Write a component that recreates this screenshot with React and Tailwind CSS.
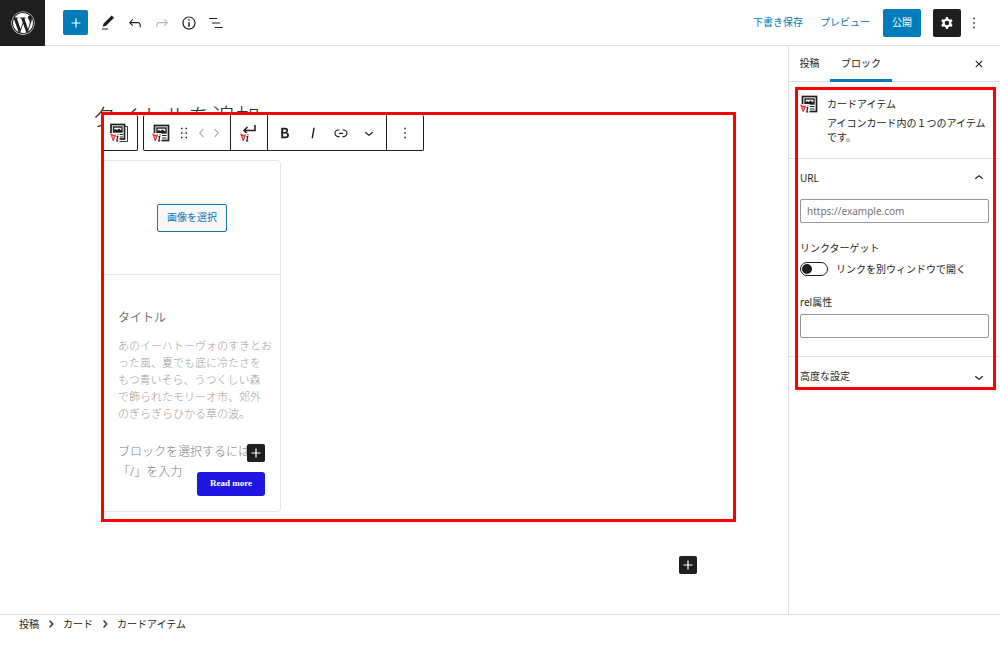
import React from 'react'
import { FaWordpress } from 'react-icons/fa'

const paths = {
  plus: 'M18 11.2h-5.2V6h-1.6v5.2H6v1.6h5.2V18h1.6v-5.2H18z',
  pencil: 'M20.1 5.1L16.9 2 6.2 12.7l-1.3 4.4 4.5-1.3L20.1 5.1zM4 20.8h8v-1.5H4v1.5z',
  undo: 'M18.3 11.7c-.6-.6-1.4-.9-2.3-.9H6.7l2.9-3.3-1.1-1-4.5 5L8.5 16l1-1-2.7-2.7H16c.5 0 .9.2 1.3.5 1 1 1 3.4 1 4.5v.3h1.5v-.2c0-1.5 0-4.3-1.5-5.7z',
  redo: 'M15.6 6.5l-1.1 1 2.9 3.3H8c-.9 0-1.7.3-2.3.9-1.4 1.5-1.4 4.2-1.4 5.6v.2h1.5v-.3c0-1.1 0-3.5 1-4.5.3-.3.7-.5 1.3-.5h9.2L14.5 15l1.1 1.1 4.6-4.6-4.6-5z',
  info: 'M12 3.2c-4.8 0-8.8 3.9-8.8 8.8 0 4.8 3.9 8.8 8.8 8.8 4.8 0 8.8-3.9 8.8-8.8 0-4.8-4-8.8-8.8-8.8zm0 16c-4 0-7.2-3.3-7.2-7.2C4.8 8 8 4.8 12 4.8s7.2 3.3 7.2 7.2c0 4-3.2 7.2-7.2 7.2zM11 17h2v-6h-2v6zm0-8h2V7h-2v2z',
  listView: 'M13.8 5.2H3v1.5h10.8V5.2zm-3.6 12v1.5H21v-1.5H10.2zm7.2-6H6.6v1.5h10.8v-1.5z',
  cog: 'M10.289 4.836A1 1 0 0111.275 4h1.306a1 1 0 01.987.836l.244 1.466c.787.26 1.503.679 2.108 1.218l1.393-.522a1 1 0 011.216.437l.653 1.13a1 1 0 01-.23 1.273l-1.148.944a6.025 6.025 0 010 2.435l1.149.946a1 1 0 01.23 1.272l-.653 1.13a1 1 0 01-1.216.437l-1.394-.522c-.605.54-1.32.958-2.108 1.218l-.244 1.466a1 1 0 01-.987.836h-1.306a1 1 0 01-.986-.836l-.244-1.466a5.995 5.995 0 01-2.108-1.218l-1.394.522a1 1 0 01-1.217-.436l-.653-1.131a1 1 0 01.23-1.272l1.149-.946a6.026 6.026 0 010-2.435l-1.148-.944a1 1 0 01-.23-1.272l.653-1.131a1 1 0 011.217-.437l1.393.522a5.994 5.994 0 012.108-1.218l.244-1.466zM14.929 12a3 3 0 11-6 0 3 3 0 016 0z',
  more: 'M13 19h-2v-2h2v2zm0-6h-2v-2h2v2zm0-6h-2V5h2v2z',
  close: 'M12 13.06l3.712 3.713 1.061-1.06L13.061 12l3.712-3.712-1.06-1.06L12 10.938 8.288 7.227l-1.061 1.06L10.939 12l-3.712 3.712 1.06 1.061L12 13.061z',
  drag: 'M8 7h2V5H8v2zm0 6h2v-2H8v2zm0 6h2v-2H8v2zm6-14v2h2V5h-2zm0 8h2v-2h-2v2zm0 6h2v-2h-2v2z',
  chevronLeft: 'M14.6 7l-1.2-1L8 12l5.4 6 1.2-1-4.6-5z',
  chevronRight: 'M10.6 6L9.4 7l4.6 5-4.6 5 1.2 1 5.4-6z',
  chevronDown: 'M17.5 11.6L12 16l-5.5-4.4.9-1.2L12 14l4.5-3.6 1 1.2z',
  chevronUp: 'M6.5 12.4L12 8l5.5 4.4-.9 1.2L12 10l-4.5 3.6-1-1.2z',
  bold: 'M14.7 11.3c1-.6 1.5-1.6 1.5-3 0-2.3-1.3-3.4-4-3.4H7v14h5.8c1.4 0 2.5-.3 3.3-1 .8-.7 1.2-1.7 1.2-2.9.1-1.9-.8-3.1-2.6-3.7zm-5.1-4h2.3c.6 0 1.1.1 1.4.4.3.3.5.7.5 1.2s-.2 1-.5 1.2c-.3.3-.8.4-1.4.4H9.6V7.3zm4.6 9c-.4.3-1 .4-1.7.4H9.6v-3.9h2.9c.7 0 1.3.2 1.7.5.4.3.6.8.6 1.5s-.2 1.2-.6 1.5z',
  italic: 'M12.5 5L10 19h1.9l2.5-14z',
  link: 'M15.6 7.2H14v1.5h1.6c2 0 3.7 1.7 3.7 3.7s-1.7 3.7-3.7 3.7H14v1.5h1.6c2.8 0 5.2-2.3 5.2-5.2 0-2.9-2.3-5.2-5.2-5.2zM4.7 12.4c0-2 1.7-3.7 3.7-3.7H10V7.2H8.4c-2.9 0-5.2 2.3-5.2 5.2 0 2.9 2.3 5.2 5.2 5.2H10v-1.5H8.4c-2 0-3.7-1.7-3.7-3.7zm4.6.9h5.3v-1.5H9.3v1.5z',
}

const Icon = ({ name, className = 'size-[18px]' }) => (
  <svg viewBox="0 0 24 24" fill="currentColor" fillRule="evenodd" className={`shrink-0 ${className}`} aria-hidden="true">
    <path d={paths[name]} />
  </svg>
)

// Small red and black plugin mark in the lower left corner of its block icons
const Mark = () => (
  <g fill="none">
    <path d="M1 10h9.500v9.500H1z" fill="#fff" />
    <path d="M2 11l2.200 6.500L6.500 12l-2 .8L2 11z" fill="#fbd0d3" stroke="#e8323c" strokeWidth="1.2" strokeLinejoin="round" />
    <path d="M7.500 13.500h1.200l-.9 4.300h1.400M9 11.300v.9" stroke="#1e1e1e" strokeWidth="1.200" />
  </g>
)

const CardIcon = () => (
  <svg viewBox="0 0 20 20" className="size-5 shrink-0" aria-hidden="true">
    <rect x="3.500" y="2.500" width="14" height="15" fill="#fff" stroke="#1e1e1e" strokeWidth="1.700" />
    <rect x="6" y="5" width="9" height="5" fill="#fff" stroke="#1e1e1e" strokeWidth="1.400" />
    <path d="M6 10V8.500l2-1.500 1.500 1 2-1.500L15 9v1z" fill="#1e1e1e" />
    <path d="M11 12.500h4.500M11 15h4.500" stroke="#1e1e1e" strokeWidth="1.200" />
    <Mark />
  </svg>
)

const CardsIcon = () => (
  <svg viewBox="0 0 20 20" className="size-5 shrink-0" aria-hidden="true">
    <path d="M16 3.500h2.500v15H8" fill="none" stroke="#1e1e1e" strokeWidth="0.900" />
    <rect x="2" y="1.500" width="13.500" height="14.500" fill="#fff" stroke="#1e1e1e" strokeWidth="1.700" />
    <rect x="4.500" y="4" width="8.500" height="5" fill="#fff" stroke="#1e1e1e" strokeWidth="1.400" />
    <path d="M4.500 9V7.500l2-1.500L8 7l2-1.500L13 8v1z" fill="#1e1e1e" />
    <path d="M10.500 11.500H14M10.500 14H14" stroke="#1e1e1e" strokeWidth="1.200" />
    <Mark />
  </svg>
)

const ReturnIcon = () => (
  <svg viewBox="0 0 20 20" className="size-5 shrink-0" aria-hidden="true">
    <path d="M16 2v5.500H5M8.500 4L5 7.500 8.500 11" fill="none" stroke="#1e1e1e" strokeWidth="1.500" />
    <Mark />
  </svg>
)

const Inserter = ({ className = '' }) => (
  <button aria-label="ブロックを追加" className={`flex size-[18px] items-center justify-center rounded-xs bg-[#1e1e1e] text-white ${className}`}>
    <Icon name="plus" />
  </button>
)

const tools = [
  { name: 'pencil', label: 'ツール' },
  { name: 'undo', label: '元に戻す' },
  { name: 'redo', label: 'やり直す', disabled: true },
  { name: 'info', label: '詳細' },
  { name: 'listView', label: 'リスト表示' },
]

const Header = () => (
  <header className="flex h-[46px] items-center border-b border-[#e0e0e0]">
    <a href="#" aria-label="投稿一覧" className="-mb-px flex h-[46px] w-[45px] items-center justify-center bg-[#1e1e1e] text-white">
      <FaWordpress className="size-6" />
    </a>
    <div className="flex items-center pl-[18px]">
      <button aria-label="ブロック挿入ツール" className="mr-1.5 flex size-[25px] items-center justify-center rounded-xs bg-[#007cba] text-white">
        <Icon name="plus" />
      </button>
      {tools.map((tool) => (
        <button
          key={tool.name}
          aria-label={tool.label}
          disabled={tool.disabled}
          className="flex h-[25px] w-[27px] items-center justify-center disabled:text-[#b5b5b5]"
        >
          <Icon name={tool.name} />
        </button>
      ))}
    </div>
    <div className="ml-auto flex items-center pr-[17px]">
      <button className="mr-[17px] text-[#007cba]">下書き保存</button>
      <button className="mr-[13px] text-[#007cba]">プレビュー</button>
      <button className="mr-3 h-7 rounded-xs bg-[#007cba] px-[9px] text-white">公開</button>
      <button aria-label="設定" className="mr-1 flex size-7 items-center justify-center rounded-xs bg-[#1e1e1e] text-white">
        <Icon name="cog" />
      </button>
      <button aria-label="オプション"><Icon name="more" /></button>
    </div>
  </header>
)

const BlockToolbar = () => (
  <div className="flex h-9 gap-[5px]">
    <button aria-label="カードを選択" className="flex w-[34px] items-center rounded-r-xs border border-l-0 border-t-0 border-[#1e1e1e] pl-[5px]">
      <CardsIcon />
    </button>
    <div className="flex divide-x divide-[#1e1e1e] rounded-xs border border-t-0 border-[#1e1e1e]">
      <div className="flex w-[87px] items-center pl-[7px]">
        <button aria-label="カードアイテム"><CardIcon /></button>
        <button aria-label="ドラッグ" className="ml-1"><Icon name="drag" /></button>
        <button aria-label="左に移動" disabled className="text-[#aaa]"><Icon name="chevronLeft" /></button>
        <button aria-label="右に移動" disabled className="-ml-1 text-[#aaa]"><Icon name="chevronRight" /></button>
      </div>
      <button aria-label="改行" className="flex w-[37px] items-center justify-center"><ReturnIcon /></button>
      <div className="flex w-[119px] items-center gap-[10px] pl-2">
        <button aria-label="太字"><Icon name="bold" /></button>
        <button aria-label="イタリック"><Icon name="italic" /></button>
        <button aria-label="リンク"><Icon name="link" /></button>
        <button aria-label="さらに表示"><Icon name="chevronDown" /></button>
      </div>
      <button aria-label="オプション" className="flex w-9 items-center justify-center"><Icon name="more" /></button>
    </div>
  </div>
)

const Card = () => (
  <article className="mt-[9px] w-[177px] rounded-r-sm border border-l-0 border-[#e6e6e6]">
    <div className="flex h-[114px] items-center justify-center border-b border-[#e6e6e6]">
      <button className="h-7 rounded-xs border border-[#2271b1] bg-[#f6f7f7] px-[9px] text-[#2271b1]">画像を選択</button>
    </div>
    <div className="relative px-[14px] pt-[33px] pb-[29px]">
      <h3 className="text-xs/5 text-[#777]">タイトル</h3>
      <p className="mt-[9px] text-[11px]/[17px] font-light whitespace-nowrap text-[#a0a0a0]">
        あのイーハトーヴォのすきとお<br />
        った風、夏でも底に冷たさを<br />
        もつ青いそら、うつくしい森<br />
        で飾られたモリーオ市、郊外<br />
        のぎらぎらひかる草の波。
      </p>
      <p className="mt-5 text-xs/5 font-light whitespace-nowrap text-[#808080]">
        ブロックを選択するには<br />
        「/」を入力
      </p>
      <Inserter className="absolute right-[15px] bottom-[49px]" />
      <button className="absolute right-[15px] bottom-[15px] h-6 rounded-[3px] bg-[#1f16e0] px-[13px] font-['Liberation_Serif','Noto_Sans_CJK_JP',serif] text-[9px] font-bold text-white">
        Read more
      </button>
    </div>
  </article>
)

const Editor = () => (
  <main className="min-w-0 flex-1 pt-[55px]">
    <h1 className="h-[11px] pl-[92px] text-2xl/8 font-light whitespace-nowrap text-[#333]">タイトルを追加</h1>
    <section className="relative mr-[52px] ml-[101px] h-[410px] border-3 border-[#ff0000] bg-white">
      <BlockToolbar />
      <Card />
    </section>
    <div className="mt-[34px] flex justify-end pr-[91px]">
      <Inserter />
    </div>
  </main>
)

const Sidebar = () => (
  <aside className="w-[212px] shrink-0 border-l border-[#e0e0e0]">
    <div className="flex h-9 items-stretch border-b border-[#e0e0e0]">
      <button className="w-[41px]">投稿</button>
      <button className="-mb-px border-b-3 border-[#007cba] px-[11px] pt-0.5">ブロック</button>
      <button aria-label="設定を閉じる" className="mr-3 ml-auto"><Icon name="close" /></button>
    </div>
    <div className="relative">
      <div className="flex h-[77px] gap-2 border-b border-[#e0e0e0] pt-3 pr-[11px] pl-[10px]">
        <CardIcon />
        <div>
          <h2 className="leading-5">カードアイテム</h2>
          <p className="mt-0.5 leading-[14px]">アイコンカード内の１つのアイテムです。</p>
        </div>
      </div>
      <div className="border-b border-[#e0e0e0] px-[11px] pb-[18px]">
        <div className="flex h-[38px] items-center justify-between">
          <label htmlFor="url">URL</label>
          <button aria-label="URLパネルを閉じる" className="mr-px"><Icon name="chevronUp" /></button>
        </div>
        <input
          id="url"
          type="url"
          placeholder="https://example.com"
          className="mt-0.5 block h-6 w-full rounded-xs border border-[#949494] px-1.5 placeholder:text-[#757575]"
        />
        <p className="mt-[15px] leading-5">リンクターゲット</p>
        <label className="flex h-[22px] items-center gap-2">
          <input
            type="checkbox"
            className="h-[14px] w-7 appearance-none rounded-full border border-[#1e1e1e] before:m-px before:block before:size-[10px] before:rounded-full before:bg-[#1e1e1e] checked:before:ml-[15px]"
          />
          リンクを別ウィンドウで開く
        </label>
        <label htmlFor="rel" className="mt-3 block leading-5">rel属性</label>
        <input id="rel" type="text" className="mt-0.5 block h-6 w-full rounded-xs border border-[#949494] px-1.5" />
      </div>
      <button className="flex h-[39px] w-full items-center justify-between pr-3 pl-[11px]">
        高度な設定
        <Icon name="chevronDown" />
      </button>
      <div className="pointer-events-none absolute top-[5px] right-1 bottom-1.5 left-1.5 border-3 border-[#ff0000]" />
    </div>
  </aside>
)

const crumbs = ['投稿', 'カード', 'カードアイテム']

const App = () => (
  <div className="flex min-h-screen flex-col bg-white font-['Noto_Sans','Noto_Sans_CJK_JP',sans-serif] text-[10px] text-[#1e1e1e]">
    <Header />
    <div className="flex flex-1">
      <Editor />
      <Sidebar />
    </div>
    <footer className="h-[43px] border-t border-[#e0e0e0] pl-[19px]">
      <nav aria-label="パンくずリスト" className="flex h-[18px] items-center">
        {crumbs.map((crumb, index) => (
          <React.Fragment key={crumb}>
            {index > 0 && <Icon name="chevronRight" className="mx-[5px] size-3.5 stroke-current" />}
            <a href="#">{crumb}</a>
          </React.Fragment>
        ))}
      </nav>
    </footer>
  </div>
)

export default App
